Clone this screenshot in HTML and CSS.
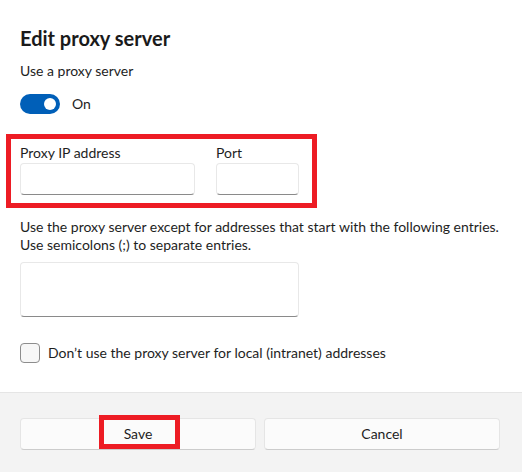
FILE: index.html
```html
<!DOCTYPE html>
<html lang="en">
<head>
<meta charset="utf-8">
<title>Edit proxy server</title>
<link rel="stylesheet" href="styles.css">
</head>
<body>
<div class="dialog">
  <main class="content">
    <h1 class="title">Edit proxy server</h1>
    <div class="label">Use a proxy server</div>
    <div class="toggle-row">
      <span class="toggle"><span class="knob"></span></span>
      <span class="toggle-text">On</span>
    </div>
    <div class="highlight fields">
      <div class="field field-ip">
        <div class="label">Proxy IP address</div>
        <div class="input"></div>
      </div>
      <div class="field field-port">
        <div class="label">Port</div>
        <div class="input"></div>
      </div>
    </div>
    <p class="desc">Use the proxy server except for addresses that start with the following entries.<br>Use semicolons (;) to separate entries.</p>
    <div class="input textarea"></div>
    <div class="check-row">
      <span class="checkbox"></span>
      <span class="check-text">Don’t use the proxy server for local (intranet) addresses</span>
    </div>
  </main>
  <footer class="footer">
    <div class="btn btn-save">Save<span class="save-mark"></span></div>
    <div class="btn">Cancel</div>
  </footer>
</div>
</body>
</html>
```
FILE: styles.css
```css
* { box-sizing: border-box; }
html, body { margin: 0; padding: 0; background: #ffffff; }
body {
  font-family: "Lato", "Roboto", "Liberation Sans", sans-serif;
  font-size: 14px;
  color: #1e1e1e;
  width: 522px;
  height: 472px;
  overflow: hidden;
}
.dialog { display: flex; flex-direction: column; height: 472px; }
.content {
  padding: 24px 22px 0 20px;
  height: 393px;
  border-bottom: 1px solid #e5e5e5;
}
.title {
  margin: 0;
  font-size: 20px;
  font-weight: 700;
  line-height: 28px;
  color: #1a1a1a;
}
.label { line-height: 20px; }
.content > .label { margin-top: 9px; }
.toggle-row {
  margin-top: 13px;
  display: flex;
  align-items: center;
  height: 20px;
}
.toggle {
  width: 40px;
  height: 20px;
  border-radius: 10px;
  background: #005fb8;
  display: flex;
  align-items: center;
  justify-content: flex-end;
  padding-right: 4px;
}
.knob { width: 12px; height: 12px; border-radius: 50%; background: #ffffff; }
.toggle-text { margin-left: 12px; line-height: 20px; }
.highlight { border: 5px solid #ed1c24; }
.fields {
  margin: 20px 0 0 -14px;
  width: 311px;
  padding: 4px 13px 8px 9px;
  display: flex;
  gap: 21px;
}
.field-ip { width: 175px; }
.field-port { width: 83px; }
.input {
  height: 32px;
  background: #ffffff;
  border: 1px solid #e8e8e8;
  border-bottom: 1px solid #8a8a8a;
  border-radius: 4px;
}
.desc {
  margin: 10px 0 0;
  line-height: 18px;
}
.textarea { margin-top: 8px; width: 279px; height: 55px; }
.check-row {
  margin-top: 26px;
  display: flex;
  align-items: center;
  height: 20px;
}
.checkbox {
  width: 20px;
  height: 20px;
  border: 1px solid #8d8d8d;
  border-radius: 4px;
  background: #f7f7f7;
}
.check-text { margin-left: 8px; line-height: 20px; }
.footer {
  flex: 1;
  background: #f3f3f3;
  padding: 25px 22px 0 20px;
  display: flex;
  gap: 8px;
  align-items: flex-start;
}
.btn {
  position: relative;
  flex: 1;
  height: 32px;
  background: #fbfbfb;
  border: 1px solid #e5e5e5;
  border-bottom-color: #cccccc;
  border-radius: 4px;
  display: flex;
  align-items: center;
  justify-content: center;
  line-height: 20px;
}
.save-mark {
  position: absolute;
  left: 78px;
  top: -4px;
  width: 81px;
  height: 34px;
  border: 5px solid #ed1c24;
}
```
